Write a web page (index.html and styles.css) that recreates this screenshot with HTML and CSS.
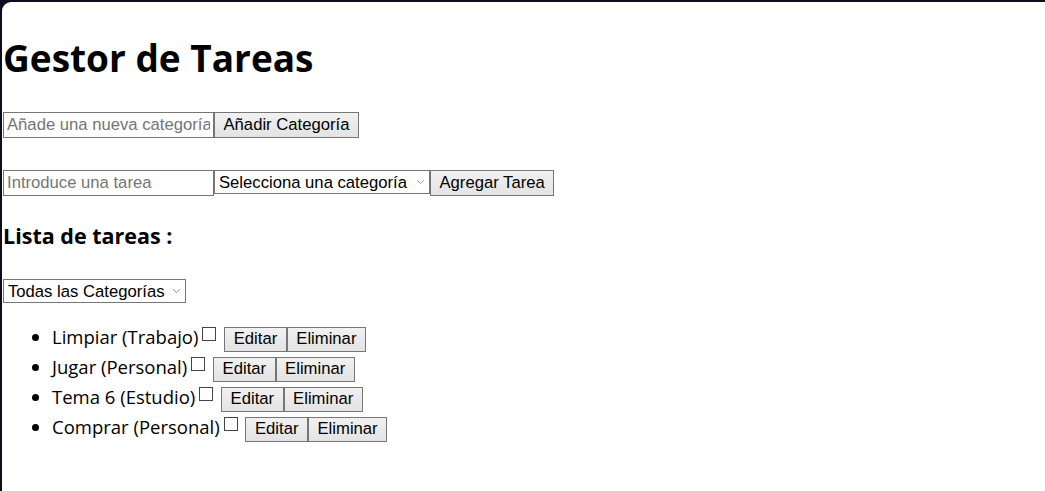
FILE: index.html
```html
<!DOCTYPE html>
<html lang="es">
<head>
<meta charset="utf-8">
<title>Gestor de Tareas</title>
<link rel="stylesheet" href="styles.css">
</head>
<body>
<div class="frame">
  <main class="page">
    <h1 class="title">Gestor de Tareas</h1>
    <div class="row row-cat">
      <input class="field" type="text" placeholder="Añade una nueva categoría"><button class="btn btn-row">Añadir Categoría</button>
    </div>
    <div class="row row-task">
      <input class="field" type="text" placeholder="Introduce una tarea"><select class="select select-cat"><option>Selecciona una categoría</option></select><button class="btn btn-row">Agregar Tarea</button>
    </div>
    <h3 class="subtitle">Lista de tareas :</h3>
    <select class="select select-filter"><option>Todas las Categorías</option></select>
    <ul class="tasks">
      <li class="task"><span class="task-text">Limpiar (Trabajo)</span><input class="check" type="checkbox"> <button class="btn">Editar</button><button class="btn">Eliminar</button></li>
      <li class="task"><span class="task-text">Jugar (Personal)</span><input class="check" type="checkbox"> <button class="btn">Editar</button><button class="btn">Eliminar</button></li>
      <li class="task"><span class="task-text">Tema 6 (Estudio)</span><input class="check" type="checkbox"> <button class="btn">Editar</button><button class="btn">Eliminar</button></li>
      <li class="task"><span class="task-text">Comprar (Personal)</span><input class="check" type="checkbox"> <button class="btn">Editar</button><button class="btn">Eliminar</button></li>
    </ul>
  </main>
</div>
</body>
</html>
```
FILE: styles.css
```css
html, body {
  margin: 0;
  padding: 0;
  height: 100%;
}

body {
  background: #0b0c1c;
  font-family: "Open Sans", "Noto Sans", sans-serif;
  color: #000;
}

.frame {
  box-sizing: border-box;
  height: 100vh;
  padding: 2px 0 0 2px;
  overflow: hidden;
}

.page {
  box-sizing: border-box;
  height: 100%;
  background: #fff;
  border-top-left-radius: 9px;
  padding-left: 1px;
  display: flex;
  flex-direction: column;
  align-items: flex-start;
}

.title {
  margin: 34px 0 0;
  font-size: 37px;
  line-height: 44px;
  font-weight: 700;
}

.row {
  display: flex;
  align-items: flex-start;
}

.row-cat {
  margin-top: 32px;
}

.row-task {
  margin-top: 32px;
}

.field {
  box-sizing: border-box;
  width: 211px;
  height: 26px;
  margin: 0;
  padding: 2px 3px;
  border: 1px solid #767676;
  border-radius: 0;
  font-family: "Liberation Sans", Arial, sans-serif;
  font-size: 16.67px;
  color: #000;
  background: #fff;
  outline: none;
}

.field::placeholder {
  color: #757575;
}

.btn {
  box-sizing: border-box;
  margin: 0;
  padding: 1.5px 8.5px;
  border: 1px solid #767676;
  border-radius: 0;
  background: linear-gradient(#f1f1f1, #e3e3e3);
  font-family: "Liberation Sans", Arial, sans-serif;
  font-size: 16.67px;
  line-height: normal;
  color: #000;
}

.btn-row {
  height: 26px;
  padding-top: 0;
  padding-bottom: 0;
}

.select {
  box-sizing: border-box;
  height: 24px;
  margin: 0;
  padding: 0 20px 0 4px;
  border: 1px solid #767676;
  border-radius: 0;
  -webkit-appearance: none;
  appearance: none;
  background: #fff url("data:image/svg+xml;utf8,<svg xmlns='http://www.w3.org/2000/svg' width='9' height='6' viewBox='0 0 9 6'><path d='M1 1.2 L4.5 4.5 L8 1.2' fill='none' stroke='%23999' stroke-width='1'/></svg>") no-repeat right 4px center;
  font-family: "Liberation Sans", Arial, sans-serif;
  font-size: 16.67px;
  color: #000;
}

.select-cat {
  width: 216px;
}

.subtitle {
  margin: 27px 0 0;
  font-size: 21.5px;
  line-height: 26px;
  font-weight: 700;
}

.select-filter {
  width: 183px;
  margin-top: 30px;
}

.tasks {
  margin: 19px 0 0;
  padding-left: 49px;
  font-size: 18.5px;
  line-height: 30px;
}

.task-text {
  color: #000;
}

.check {
  -webkit-appearance: none;
  appearance: none;
  box-sizing: border-box;
  width: 14px;
  height: 14px;
  margin: 0 3px 3px 4px;
  border: 1px solid #444;
  border-radius: 0;
  background: #fff;
  vertical-align: baseline;
}
```
